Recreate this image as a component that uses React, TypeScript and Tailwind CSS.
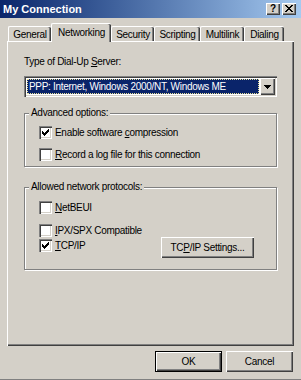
import React from 'react';

const font = { fontFamily: '"Liberation Sans", Arial, sans-serif' };

const raised = 'bg-[#d4d0c8] shadow-[inset_1px_1px_#ffffff,inset_-1px_-1px_#404040,inset_-2px_-2px_#808080]';
const sunken = 'shadow-[inset_1px_1px_#808080,inset_2px_2px_#404040,inset_-1px_-1px_#ffffff,inset_-2px_-2px_#d4d0c8]';
const etched = 'border border-[#808080] shadow-[1px_1px_0_#ffffff,inset_1px_1px_0_#ffffff]';

// classic 7x7 check mark
const checkPixels = [
  [6, 0], [5, 1], [6, 1], [0, 2], [4, 2], [5, 2], [6, 2],
  [0, 3], [1, 3], [3, 3], [4, 3], [5, 3], [0, 4], [1, 4], [2, 4], [3, 4], [4, 4],
  [1, 5], [2, 5], [3, 5], [2, 6],
];

function Checkbox({ checked }: { checked?: boolean }) {
  return (
    <span className={`w-[13px] h-[13px] bg-white flex items-center justify-center shrink-0 ${sunken}`}>
      {checked && (
        <svg width="7" height="7" viewBox="0 0 7 7" shapeRendering="crispEdges">
          {checkPixels.map(([x, y]) => (
            <rect key={`${x}-${y}`} x={x} y={y} width="1" height="1" fill="#000" />
          ))}
        </svg>
      )}
    </span>
  );
}

function CheckRow({ checked, children }: { checked?: boolean; children: React.ReactNode }) {
  return (
    <div className="flex items-center gap-[3px] h-[13px]">
      <Checkbox checked={checked} />
      <span className="leading-[13px] whitespace-nowrap">{children}</span>
    </div>
  );
}

function Group({ label, className, children }: { label: string; className: string; children: React.ReactNode }) {
  return (
    <div className={`relative w-[253px] ${etched} ${className}`}>
      <span className="absolute -top-[8px] left-[4px] px-[2px] bg-[#d4d0c8] leading-[13px] whitespace-nowrap">{label}</span>
      {children}
    </div>
  );
}

const tabs = ['General', 'Networking', 'Security', 'Scripting', 'Multilink', 'Dialing'];
const tabWidths: Record<string, string> = {
  General: 'w-[43px]',
  Networking: 'w-[60px]',
  Security: 'w-[43px]',
  Scripting: 'w-[46px]',
  Multilink: 'w-[44px]',
  Dialing: 'w-[40px]',
};

export default function App() {
  return (
    <div className="w-[301px] h-[380px] bg-[#d4d0c8] text-[10px] tracking-[-0.3px] text-black overflow-hidden shadow-[inset_0_-1px_#808080]" style={font}>
      {/* Title bar */}
      <div className="h-[18px] flex items-center justify-between pl-[3px] pr-[5px] bg-gradient-to-r from-[#0a246a] to-[#a6caf0]">
        <span className="text-white font-bold text-[11px] tracking-normal leading-[13px]">My Connection</span>
        <div className="flex gap-[2px] mt-[-1px]">
          <div className={`w-[14px] h-[12px] flex items-center justify-center ${raised}`}>
            <span className="font-bold text-[10px] leading-[10px]">?</span>
          </div>
          <div className={`w-[14px] h-[12px] flex items-center justify-center ${raised}`}>
            <svg width="8" height="7" viewBox="0 0 8 7" shapeRendering="crispEdges">
              {[0, 1, 2, 3, 4, 5, 6].map((i) => (
                <React.Fragment key={i}>
                  <rect x={i} y={i} width="2" height="1" fill="#000" />
                  <rect x={6 - i} y={i} width="2" height="1" fill="#000" />
                </React.Fragment>
              ))}
            </svg>
          </div>
        </div>
      </div>

      {/* Tabs */}
      <div className="relative z-10 h-[23px] flex items-end pl-[8px]">
        {tabs.map((t) => {
          const active = t === 'Networking';
          return (
            <div
              key={t}
              className={`${tabWidths[t]} ${active ? 'h-[19px] -mb-[1px] pb-[2px]' : 'h-[15px]'} flex items-center justify-center bg-[#d4d0c8] border-l border-t border-white rounded-t-[2px] shadow-[inset_-1px_0_#404040,inset_-2px_0_#808080] leading-[13px] whitespace-nowrap`}
            >
              {t}
            </div>
          );
        })}
      </div>

      {/* Tab page */}
      <div className="ml-[7px] w-[287px] h-[305px] border-l border-t border-white shadow-[inset_-1px_-1px_#404040,inset_-2px_-2px_#808080] pl-[16px]">
        <div className="mt-[13px] leading-[13px]">
          Type of Dial-Up <u className="underline-offset-[1px]">S</u>erver:
        </div>

        {/* Combo box */}
        <div className={`mt-[8px] w-[253px] h-[21px] bg-white flex items-center p-[2px] ${sunken}`}>
          <div className="flex-1 h-[15px] ml-[1px] mr-[1px] bg-[#0a246a] border border-dotted border-[#e8e098] text-white leading-[13px] pl-[1px] whitespace-nowrap overflow-hidden">
            PPP: Internet, Windows 2000/NT, Windows ME
          </div>
          <div className={`w-[15px] h-[17px] flex items-center justify-center ${raised}`}>
            <svg width="7" height="4" viewBox="0 0 7 4" shapeRendering="crispEdges">
              <path d="M0 0h7v1h-1v1h-1v1h-1v1h-1v-1h-1v-1h-1v-1h-1z" fill="#000" />
            </svg>
          </div>
        </div>

        {/* Advanced options */}
        <Group label="Advanced options:" className="mt-[16px] h-[54px] pl-[14px] pt-[12px]">
          <CheckRow checked>
            Enable software <u className="underline-offset-[1px]">c</u>ompression
          </CheckRow>
          <div className="mt-[9px]">
            <CheckRow>
              <u className="underline-offset-[1px]">R</u>ecord a log file for this connection
            </CheckRow>
          </div>
        </Group>

        {/* Allowed network protocols */}
        <Group label="Allowed network protocols:" className="mt-[20px] h-[83px] pl-[14px] pt-[13px]">
          <CheckRow>
            <u className="underline-offset-[1px]">N</u>etBEUI
          </CheckRow>
          <div className="mt-[10px]">
            <CheckRow>
              <u className="underline-offset-[1px]">I</u>PX/SPX Compatible
            </CheckRow>
          </div>
          <div className="flex items-start">
            <div className="w-[122px] mt-[2px]">
              <CheckRow checked>
                <u className="underline-offset-[1px]">T</u>CP/IP
              </CheckRow>
            </div>
            <button className={`w-[93px] h-[21px] flex items-center justify-center leading-[13px] ${raised}`}>
              TC<u className="underline-offset-[1px]">P</u>/IP Settings...
            </button>
          </div>
        </Group>
      </div>

      {/* Dialog buttons */}
      <div className="mt-[5px] flex justify-end gap-[4px] pr-[8px]">
        <div className="w-[67px] h-[21px] border border-black">
          <button className={`w-full h-full flex items-center justify-center leading-[13px] ${raised}`}>OK</button>
        </div>
        <button className={`w-[67px] h-[21px] flex items-center justify-center leading-[13px] ${raised}`}>Cancel</button>
      </div>
    </div>
  );
}
